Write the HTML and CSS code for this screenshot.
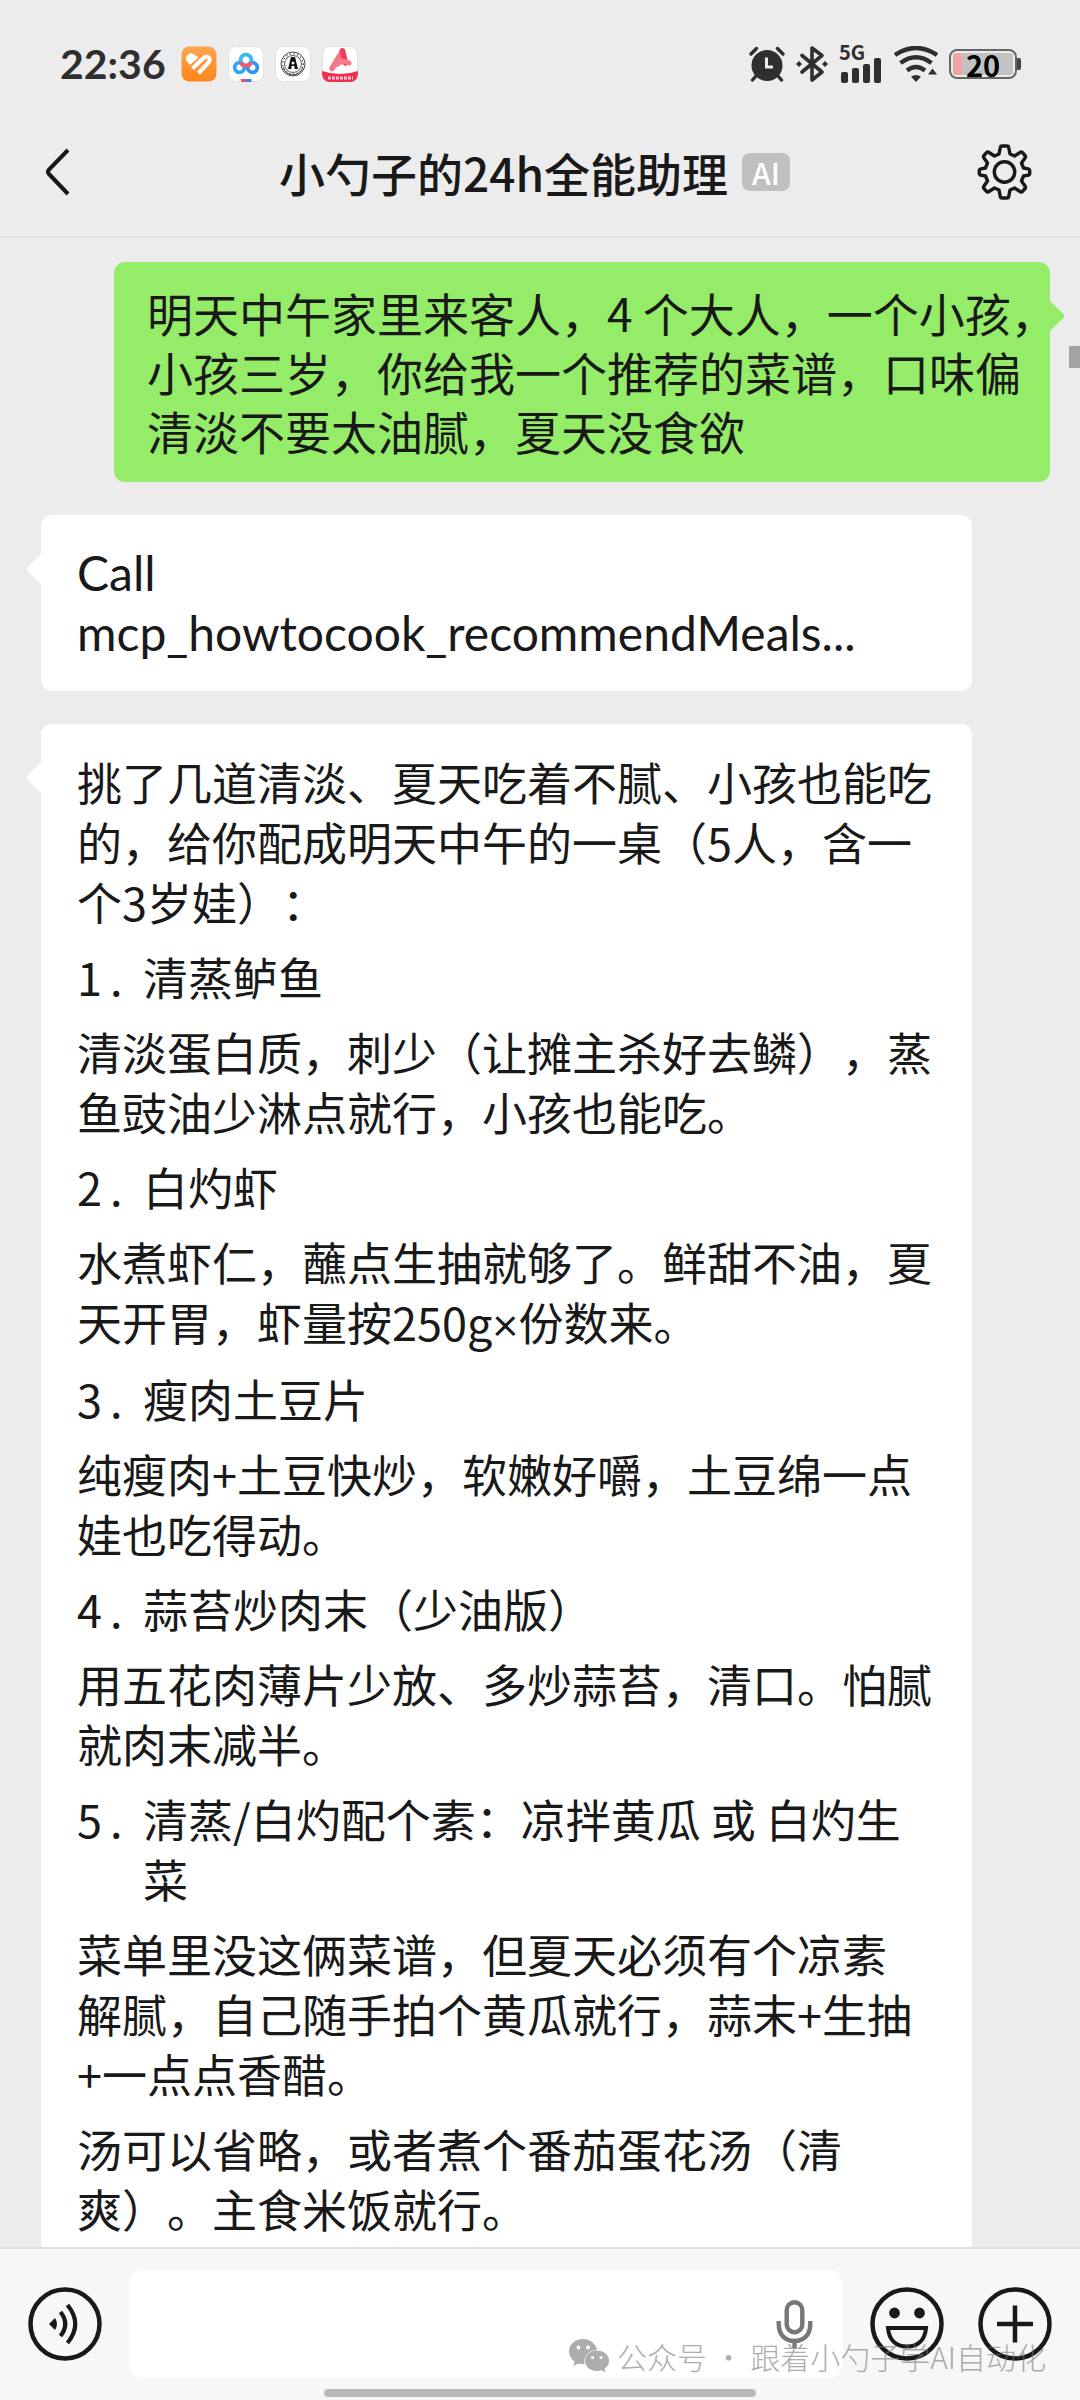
FILE: index.html
```html
<!DOCTYPE html>
<html lang="zh-CN">
<head>
    <meta charset="UTF-8">
    <meta name="viewport" content="width=device-width, initial-scale=1.0">
    <title>小勺子的24h全能助理</title>
    <link rel="stylesheet" href="styles.css">
</head>
<body>
    <!-- Status bar -->
    <div class="status-bar">
        <div class="status-left">
            <span class="time">22:36</span>
            <svg class="app-icon" viewBox="0 0 36 36">
                <defs>
                    <linearGradient id="orange" x1="0" y1="0" x2="0" y2="1">
                        <stop offset="0" stop-color="#ffa64d"/>
                        <stop offset="1" stop-color="#ff861c"/>
                    </linearGradient>
                </defs>
                <rect x="0.5" y="0.5" width="35" height="35" rx="8" fill="url(#orange)"/>
                <path d="M9 19 L6 15.500 A5 5 0 0 1 13 8.500 L17.500 11.500 Z" fill="#fff"/>
                <path d="M11.500 22.500 L22.500 12 C26.500 8.500 31 13 27.500 16.500 L17.500 27" fill="none" stroke="#fff" stroke-width="4"/>
            </svg>
            <svg class="app-icon" viewBox="0 0 36 36">
                <rect x="0.5" y="0.5" width="35" height="35" rx="8" fill="#fff" stroke="#e2e2e2"/>
                <g fill="none" stroke-width="3.800">
                    <circle cx="11.500" cy="21.500" r="4.800" stroke="#2fa5f5"/>
                    <circle cx="24.500" cy="21.500" r="4.800" stroke="#2a94f2"/>
                    <circle cx="18" cy="14" r="5.400" stroke="#35b8f7"/>
                    <path d="M12.800 16 A5.400 5.400 0 0 0 23.200 16" stroke="#ee5975"/>
                </g>
                <path d="M12.500 33 H18 V36 H13.500 Z" fill="#ef4d69"/>
                <path d="M18 33 H23.500 V36 H18 Z" fill="#3c80f2"/>
            </svg>
            <svg class="app-icon" viewBox="0 0 36 36">
                <rect x="0.5" y="0.5" width="35" height="35" rx="8" fill="#fff" stroke="#e2e2e2"/>
                <g fill="none" stroke="#333">
                    <circle cx="18" cy="18" r="12" stroke-width="0.900"/>
                    <circle cx="18" cy="18" r="8.500" stroke-width="0.800"/>
                    <circle cx="18" cy="18" r="10.200" stroke-width="1.200" stroke-dasharray="1.200 2.500"/>
                    <path d="M8 21 A10.300 10.300 0 0 0 28 21" stroke-width="0.900"/>
                </g>
                <path d="M16 11 H20 L23 23 H19.500 V20 H16.500 V23 H13 Z" fill="#111"/>
                <circle cx="18" cy="17" r="1.500" fill="#fff"/>
            </svg>
            <svg class="app-icon" viewBox="0 0 36 36">
                <rect x="0.5" y="0.5" width="35" height="35" rx="8" fill="#fff" stroke="#e2e2e2"/>
                <path d="M10 22.500 L20.500 5" stroke="#f8778a" stroke-width="5.500" stroke-linecap="round"/>
                <path d="M20.500 5 L23.500 17" stroke="#f23a58" stroke-width="5.500" stroke-linecap="round"/>
                <path d="M15 18.500 Q21 13 27 17" fill="none" stroke="#f9798a" stroke-width="5" stroke-linecap="round"/>
                <path d="M0 25 Q18 31 36 25 V28 Q35 36 28 36 H8 Q1 36 0 28 Z" fill="#ef2f50"/>
                <path d="M6 32 H31" stroke="#fff" stroke-width="3" stroke-dasharray="2.800 1.200" opacity="0.750"/>
            </svg>
        </div>
        <div class="status-right">
            <svg class="alarm" viewBox="0 0 36 36">
                <g fill="none" stroke="#2f2f2f" stroke-width="3.400" stroke-linecap="round">
                    <path d="M2 8 L7.500 2.500 M28.500 2.500 L34 8"/>
                    <path d="M7 30 L3.500 34 M29 30 L32.500 34"/>
                </g>
                <circle cx="18" cy="19.500" r="15.500" fill="#2f2f2f"/>
                <path d="M17.500 11.500 V21 H24" fill="none" stroke="#ececec" stroke-width="3"/>
            </svg>
            <svg class="bluetooth" viewBox="0 0 32 38">
                <path d="M6 10.500 L26 27 L16 35 V3 L26 10.500 L6 27" fill="none" stroke="#2f2f2f" stroke-width="3.600" stroke-linejoin="round" stroke-linecap="round"/>
                <path d="M3 16 L6 19 L3 22 L0 19 Z M29 16 L32 19 L29 22 L26 19 Z" fill="#2f2f2f"/>
            </svg>
            <div class="signal">
                <span>5G</span>
                <svg viewBox="0 0 44 26">
                    <g fill="#2f2f2f">
                        <rect x="2" y="15" width="7" height="11" rx="2"/>
                        <rect x="13" y="11" width="7" height="15" rx="2"/>
                        <rect x="24" y="7" width="7" height="19" rx="2"/>
                        <rect x="35" y="1" width="7" height="25" rx="2"/>
                    </g>
                </svg>
            </div>
            <svg class="wifi" viewBox="0 0 44 36">
                <g fill="none" stroke="#2f2f2f" stroke-width="4.400">
                    <path d="M1 9 Q22 -5 43 9"/>
                    <path d="M6.500 17 Q22 5.500 37.500 17"/>
                    <path d="M13 24.500 Q22 17.500 31 24.500"/>
                </g>
                <path d="M17 30.500 Q22 27.500 27 30.500 L22 36 Z" fill="#2f2f2f"/>
                <path d="M34 28.500 L38.500 22.500 L43 28.500 Z" fill="#2f2f2f"/>
            </svg>
            <div class="battery"><span>20</span></div>
        </div>
    </div>

    <!-- Title bar -->
    <header class="title-bar">
        <button class="icon-btn" type="button" aria-label="返回">
            <svg class="back" viewBox="0 0 24 48">
                <path d="M22 2 L3 21.500 Q1 24 3 26 L22 46" fill="none" stroke="#191919" stroke-width="4"/>
            </svg>
        </button>
        <h1>小勺子的24h全能助理 <span class="badge">AI</span></h1>
        <button class="icon-btn" type="button" aria-label="设置">
            <svg class="gear" viewBox="0 0 54 56">
                <g fill="none" stroke="#191919" stroke-width="3.400" stroke-linejoin="round">
                    <circle cx="27" cy="28" r="10.200"/>
                    <path d="M24.500 2 H29.500 Q31 2 31.200 3.500 L32.500 10 L37 12 L42.500 8.500 Q44 7.500 45 8.700 L47.500 11.500 Q48.500 12.500 47.500 14 L44 19 L46 24 L50.500 24.800 Q52.200 25.200 52.200 26.500 V29.500 Q52.200 31 50.500 31.200 L46 32 L44 37 L47.500 42 Q48.500 43.500 47.500 44.500 L45 47.300 Q44 48.500 42.500 47.500 L37 44 L32.500 46 L31.200 52.500 Q31 54 29.500 54 H24.500 Q23 54 22.800 52.500 L21.500 46 L17 44 L11.500 47.500 Q10 48.500 9 47.300 L6.500 44.500 Q5.500 43.500 6.500 42 L10 37 L8 32 L3.500 31.200 Q1.800 31 1.800 29.500 V26.500 Q1.800 25.200 3.500 24.800 L8 24 L10 19 L6.500 14 Q5.500 12.500 6.500 11.500 L9 8.700 Q10 7.500 11.500 8.500 L17 12 L21.500 10 L22.800 3.500 Q23 2 24.500 2 Z"/>
                </g>
            </svg>
        </button>
    </header>

    <!-- Messages -->
    <main class="chat">
        <div class="bubble sent">
            <p>明天中午家里来客人，4 个大人，一个小孩，<br>小孩三岁，你给我一个推荐的菜谱，口味偏<br>清淡不要太油腻，夏天没食欲</p>
        </div>

        <div class="bubble received tool-call">
            <p>Call<br>mcp_howtocook_recommendMeals...</p>
        </div>

        <div class="bubble received">
            <p>挑了几道清淡、夏天吃着不腻、小孩也能吃的，给你配成明天中午的一桌（5人，含一个3岁娃）：</p>
            <div class="dish"><span class="num"><span>1</span>.</span><span>清蒸鲈鱼</span></div>
            <p>清淡蛋白质，刺少（让摊主杀好去鳞），蒸鱼豉油少淋点就行，小孩也能吃。</p>
            <div class="dish"><span class="num"><span>2</span>.</span><span>白灼虾</span></div>
            <p>水煮虾仁，蘸点生抽就够了。鲜甜不油，夏天开胃，虾量按250g<span class="times">×</span>份数来。</p>
            <div class="dish"><span class="num"><span>3</span>.</span><span>瘦肉土豆片</span></div>
            <p>纯瘦肉+土豆快炒，软嫩好嚼，土豆绵一点娃也吃得动。</p>
            <div class="dish"><span class="num"><span>4</span>.</span><span>蒜苔炒肉末（少油版）</span></div>
            <p>用五花肉薄片少放、多炒蒜苔，清口。怕腻就肉末减半。</p>
            <div class="dish"><span class="num"><span>5</span>.</span><span>清蒸/白灼配个素：凉拌黄瓜 或 白灼生菜</span></div>
            <p>菜单里没这俩菜谱，但夏天必须有个凉素<br>解腻，自己随手拍个黄瓜就行，蒜末+生抽<br>+一点点香醋。</p>
            <p>汤可以省略，或者煮个番茄蛋花汤（清爽）。主食米饭就行。</p>
        </div>
        <div class="scroll-thumb"></div>
    </main>

    <!-- Input bar -->
    <footer class="input-bar">
        <div class="controls">
            <button class="icon-btn" type="button" aria-label="语音">
                <svg class="round" viewBox="-1 0 74 74">
                    <circle cx="36" cy="37" r="34.500" fill="none" stroke="#191919" stroke-width="4.500"/>
                    <path d="M20 37 L26 31 Q30 37 26 43 Z" fill="#191919"/>
                    <path d="M31.500 25 Q41 37 31.500 49 M38.500 18 Q54 37 38.500 56" fill="none" stroke="#191919" stroke-width="4.200"/>
                </svg>
            </button>
            <div class="field">
                <input type="text" aria-label="输入消息">
                <button class="icon-btn" type="button" aria-label="语音输入">
                    <svg class="mic" viewBox="0 0 36 48">
                        <g fill="none" stroke="#777" stroke-width="4.400">
                            <rect x="10.200" y="2.200" width="15.600" height="30" rx="7.800"/>
                            <path d="M2.200 21 V24 C2.200 34 8 41 18 41 C28 41 33.800 34 33.800 24 V21 M18 41 V48"/>
                        </g>
                    </svg>
                </button>
            </div>
            <div class="actions">
                <button class="icon-btn" type="button" aria-label="表情">
                    <svg class="round" viewBox="-1 0 74 74">
                        <circle cx="36" cy="37" r="34.500" fill="none" stroke="#191919" stroke-width="4.500"/>
                        <circle cx="23.500" cy="26" r="5.400" fill="#191919"/>
                        <circle cx="48.500" cy="26" r="5.400" fill="#191919"/>
                        <path d="M17 41 H55 C54 53 47 59.500 36 59.500 C25 59.500 18 53 17 41 Z" fill="none" stroke="#191919" stroke-width="4"/>
                    </svg>
                </button>
                <button class="icon-btn" type="button" aria-label="更多">
                    <svg class="round" viewBox="-1 0 74 74">
                        <circle cx="36" cy="37" r="34.500" fill="none" stroke="#191919" stroke-width="4.500"/>
                        <path d="M18 37 H54 M36 18.500 V55.500" stroke="#191919" stroke-width="4.500"/>
                    </svg>
                </button>
            </div>
        </div>
        <div class="home-indicator"></div>
        <div class="watermark">
            <svg viewBox="0 0 40 34">
                <path d="M14 0 C6 0 0 5.500 0 12.500 C0 16.500 2 20 5.500 22.500 L4.500 27 L9.500 24.500 Q12 25.500 15.500 25.200 C14 17 20 11 28 11 C27 4.500 21 0 14 0 Z"/>
                <path d="M28 11.500 C21 11.500 16 16 16 21.500 C16 27.500 21 32 28 32 Q30.500 32 32.500 31.200 L36.500 33.500 L35.500 29.500 C38.500 27.500 40 25 40 21.500 C40 16 35 11.500 28 11.500 Z"/>
                <g class="eyes">
                    <circle cx="9.500" cy="8.500" r="2"/>
                    <circle cx="19" cy="8.500" r="2"/>
                    <circle cx="23.500" cy="18.500" r="1.600"/>
                    <circle cx="32" cy="18.500" r="1.600"/>
                </g>
            </svg>
            <span>公众号 · 跟着小勺子学AI自动化</span>
        </div>
    </footer>
</body>
</html>
```
FILE: styles.css
```css
* {
    margin: 0;
    padding: 0;
    box-sizing: border-box;
}

body {
    display: flex;
    flex-direction: column;
    height: 100vh;
    overflow: hidden;
    background: #ececec;
    color: #191919;
    font-family: "Noto Sans CJK SC", sans-serif;
    text-spacing-trim: space-all;
}

svg {
    display: block;
    flex: none;
}

.icon-btn {
    background: none;
    border: none;
    cursor: pointer;
}

/* status bar */
.status-bar {
    display: flex;
    justify-content: space-between;
    align-items: center;
    height: 108px;
    padding: 20px 59px 0 60px;
}

.status-left,
.status-right {
    display: flex;
    align-items: center;
    gap: 11px;
}

.time {
    margin-right: 4px;
    font-family: Lato, sans-serif;
    font-size: 41px;
    font-weight: 700;
    line-height: 44px;
    color: #2f2f2f;
}

.app-icon {
    width: 36px;
    height: 36px;
}

.alarm {
    width: 36px;
    height: 36px;
}

.bluetooth {
    width: 32px;
    height: 38px;
}

.signal {
    width: 44px;
    height: 38px;
}

.signal span {
    display: block;
    height: 12px;
    font-size: 20px;
    font-weight: 700;
    line-height: 14px;
    color: #2f2f2f;
}

.signal svg {
    width: 44px;
    height: 26px;
}

.wifi {
    width: 44px;
    height: 36px;
}

.battery {
    position: relative;
    width: 68px;
    height: 30px;
    margin-right: 4px;
    padding: 2px;
    border: 2px solid #666;
    border-radius: 8px;
}

.battery::after {
    content: "";
    position: absolute;
    top: 7px;
    right: -6px;
    width: 4px;
    height: 12px;
    border-radius: 0 2px 2px 0;
    background: #444;
}

.battery span {
    display: block;
    border-radius: 3px;
    background: linear-gradient(90deg, #f2a2a2 9px, #c2c2c2 9px);
    font-size: 29px;
    font-weight: 700;
    line-height: 22px;
    text-align: center;
    color: #000;
}

/* title bar */
.title-bar {
    display: flex;
    justify-content: space-between;
    align-items: center;
    height: 130px;
    padding: 0 48px 0 46px;
    border-bottom: 2px solid #e4e4e4;
}

.title-bar h1 {
    display: flex;
    align-items: center;
    gap: 14px;
    padding-left: 22px;
    font-size: 46px;
    font-weight: 500;
    line-height: 60px;
}

.badge {
    padding: 0 10px;
    border-radius: 8px;
    background: #c0c0c0;
    color: #fff;
    font-size: 30px;
    line-height: 38px;
}

.back {
    width: 24px;
    height: 48px;
}

.gear {
    width: 55px;
    height: 56px;
}

/* messages */
.chat {
    position: relative;
    flex: 1;
    display: flex;
    flex-direction: column;
    gap: 33px;
    min-height: 0;
    padding: 24px 30px 0 41px;
    overflow: hidden;
}

.bubble {
    position: relative;
    display: flex;
    flex: none;
    flex-direction: column;
    gap: 15px;
    border-radius: 11px;
    font-size: 45px;
    line-height: 60px;
}

.bubble::before {
    content: "";
    position: absolute;
    top: 39px;
    width: 14px;
    height: 30px;
    background: inherit;
}

.sent {
    margin-left: 73px;
    padding: 21px 0 22px 33px;
    background: #95ec69;
    font-size: 46px;
    line-height: 59px;
    white-space: nowrap;
}

.sent::before {
    left: 100%;
    clip-path: polygon(0 0, 100% 45%, 100% 55%, 0 100%);
}

.received {
    margin-right: 78px;
    padding: 28px 36px 28px 36px;
    background: #fff;
}

.received::before {
    right: 100%;
    clip-path: polygon(100% 0, 0 45%, 0 55%, 100% 100%);
}

.tool-call {
    font-family: Lato, sans-serif;
    font-size: 48px;
}

.times {
    font-family: Lato, sans-serif;
}

.dish {
    display: flex;
}

.num {
    flex: none;
    width: 66px;
}

.num span {
    margin-right: 8px;
}

.scroll-thumb {
    position: absolute;
    top: 108px;
    right: 0;
    width: 11px;
    height: 22px;
    background: #a3a3a3;
}

/* input bar */
.input-bar {
    position: relative;
    border-top: 2px solid #dedede;
    background: #f7f7f7;
}

.controls {
    display: flex;
    align-items: center;
    padding: 21px 28px 0;
    gap: 27px;
}

.actions {
    display: flex;
    gap: 34px;
}

.round {
    width: 74px;
    height: 74px;
}

.field {
    display: flex;
    flex: 1;
    align-items: center;
    height: 108px;
    padding: 0 30px;
    border-radius: 15px;
    background: #fff;
}

.field input {
    flex: 1;
    min-width: 0;
    height: 100%;
    border: none;
    outline: none;
    background: transparent;
    font: inherit;
    font-size: 45px;
}

.mic {
    width: 37px;
    height: 48px;
}

.home-indicator {
    width: 40%;
    height: 8px;
    margin: 11px auto 3px;
    border-radius: 4px;
    background: #bababa;
}

.watermark {
    position: absolute;
    right: 34px;
    bottom: 24px;
    display: flex;
    align-items: center;
    gap: 8px;
    color: #777;
    font-size: 30px;
    font-weight: 300;
    line-height: 40px;
    opacity: 0.6;
}

.watermark svg {
    width: 40px;
    height: 34px;
    fill: #777;
}

.eyes {
    fill: #fff;
}
```
